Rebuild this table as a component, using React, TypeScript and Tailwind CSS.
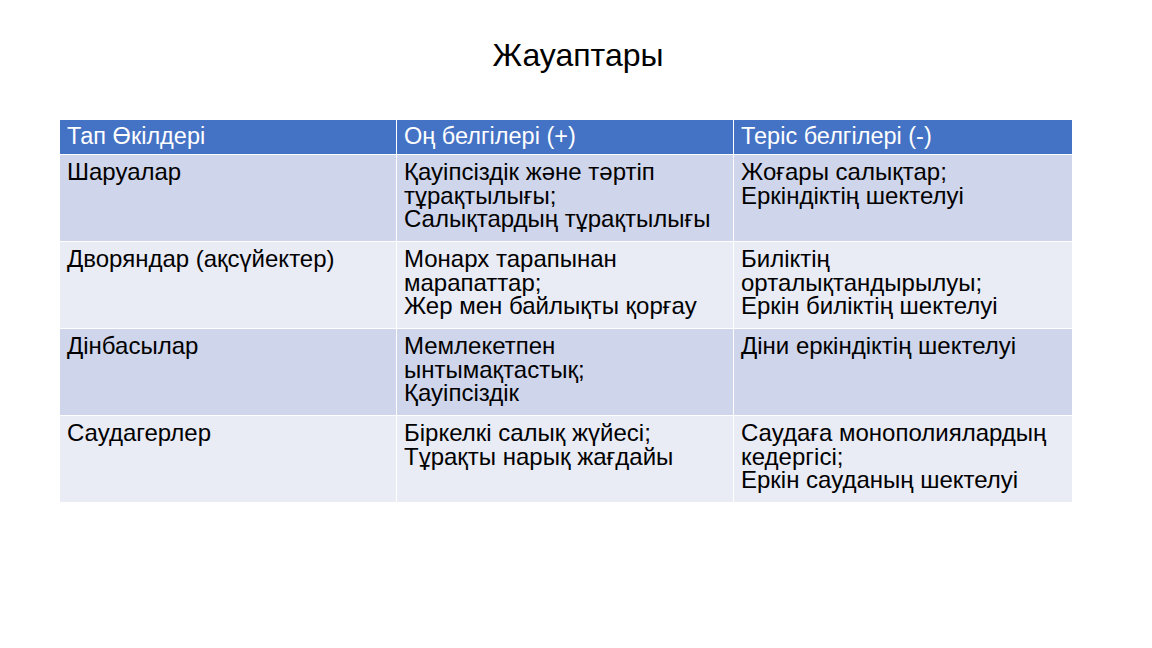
const rows: string[][][] = [
  [["Шаруалар"], ["Қауіпсіздік және тәртіп", "тұрақтылығы;", "Салықтардың тұрақтылығы"], ["Жоғары салықтар;", "Еркіндіктің шектелуі"]],
  [["Дворяндар (ақсүйектер)"], ["Монарх тарапынан", "марапаттар;", "Жер мен байлықты қорғау"], ["Биліктің", "орталықтандырылуы;", "Еркін биліктің шектелуі"]],
  [["Дінбасылар"], ["Мемлекетпен", "ынтымақтастық;", "Қауіпсіздік"], ["Діни еркіндіктің шектелуі"]],
  [["Саудагерлер"], ["Біркелкі салық жүйесі;", "Тұрақты нарық жағдайы"], ["Саудаға монополиялардың", "кедергісі;", "Еркін сауданың шектелуі"]],
]

export default function App() {
  return (
    <div className="w-[1152px] h-[648px] bg-white font-['Liberation_Sans',Arial,sans-serif] text-black">
      <h1 className="pt-[35px] text-center text-[32px] leading-[40px] pl-[4px]">Жауаптары</h1>
      <div className="mt-[45px] ml-[60px] w-[1012px] flex flex-col">
        <div className="flex h-[34px] bg-[#4472c4] text-white text-[23.5px] leading-[23.5px]">
          <div className="w-[337px] px-[7px] pt-[5px] border-r border-white">Тап Өкілдері</div>
          <div className="w-[337px] px-[7px] pt-[5px] border-r border-white">Оң белгілері (+)</div>
          <div className="flex-1 px-[7px] pt-[5px]">Теріс белгілері (-)</div>
        </div>
        {rows.map((r, i) => (
          <div
            key={i}
            className={`flex h-[87px] text-[24px] leading-[23.5px] border-t border-white ${i % 2 === 0 ? "bg-[#cfd5ea]" : "bg-[#e9ebf5]"}`}
          >
            {r.map((cell, j) => (
              <div key={j} className={`${j < 2 ? "w-[337px] border-r border-white" : "flex-1"} px-[7px] pt-[5px]`}>
                {cell.map((l, k) => (
                  <div key={k} className="whitespace-nowrap">{l}</div>
                ))}
              </div>
            ))}
          </div>
        ))}
      </div>
    </div>
  )
}
